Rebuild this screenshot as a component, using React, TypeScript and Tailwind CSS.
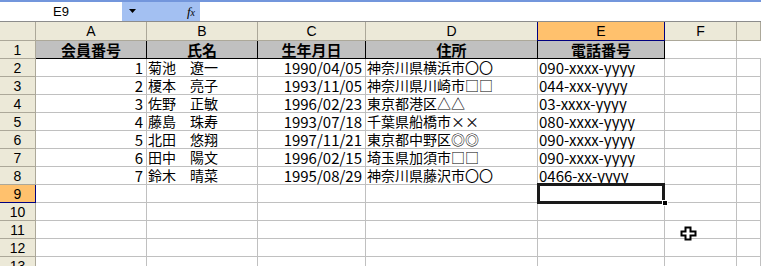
import React from 'react';

const JP = { fontFamily: '"Noto Sans CJK JP", "Liberation Sans", sans-serif' };
const UI = { fontFamily: '"Liberation Sans", Arial, sans-serif' };

const COLS = ['A', 'B', 'C', 'D', 'E', 'F', ''];

const HEAD = ['会員番号', '氏名', '生年月日', '住所', '電話番号'];

const ROWS = [
  [1, '菊池　遼一', '1990/04/05', '神奈川県横浜市〇〇', '090-xxxx-yyyy'],
  [2, '榎本　亮子', '1993/11/05', '神奈川県川崎市□□', '044-xxx-yyyy'],
  [3, '佐野　正敏', '1996/02/23', '東京都港区△△', '03-xxxx-yyyy'],
  [4, '藤島　珠寿', '1993/07/18', '千葉県船橋市××', '080-xxxx-yyyy'],
  [5, '北田　悠翔', '1997/11/21', '東京都中野区◎◎', '090-xxxx-yyyy'],
  [6, '田中　陽文', '1996/02/15', '埼玉県加須市□□', '090-xxxx-yyyy'],
  [7, '鈴木　晴菜', '1995/08/29', '神奈川県藤沢市〇〇', '0466-xx-yyyy'],
];

const GRID = 'grid grid-cols-[36px_111px_111px_108px_172px_127px_72px_1fr]';

const FormulaBar = () => (
  <div className="flex h-[22px] border-t-2 border-b border-t-[#7396dc] border-b-[#8c8c8c]">
    <div className="flex w-[122px] items-center justify-center bg-white text-[13px] text-black" style={UI}>
      E9
    </div>
    <div className="flex w-[78px] items-center justify-between bg-[#a3c0f2] pr-[5px] pl-[7px]">
      <svg width="8" height="5" viewBox="0 0 8 5">
        <path d="M0 0h7L3.5 4z" fill="#000" />
      </svg>
      <span className="text-[13px] italic text-black" style={{ fontFamily: '"Liberation Serif", serif' }}>
        f<span className="text-[10px]">x</span>
      </span>
    </div>
    <div className="flex-1 bg-white" />
  </div>
);

const ColumnHeader = () => (
  <div className={`${GRID} h-[19px]`}>
    <div className="border-r border-b border-[#aca899] bg-[#ece9d8]" />
    {COLS.map((c, i) =>
      c === 'E' ? (
        <div
          key={i}
          className="-ml-px flex items-center justify-center border-x border-b border-[#000080] bg-[#ffc16d] text-[14px] leading-[16px] text-black"
          style={UI}
        >
          {c}
        </div>
      ) : (
        <div
          key={i}
          className="flex items-center justify-center border-r border-b border-[#aca899] bg-[#ece9d8] text-[14px] leading-[16px] text-black"
          style={UI}
        >
          {c}
        </div>
      )
    )}
  </div>
);

const RowNum = ({ n }: { n: number }) =>
  n === 9 ? (
    <div
      className="flex items-center justify-center border-r border-b border-[#000080] bg-[#ffc16d] text-[14px] leading-[16px] text-black"
      style={UI}
    >
      {n}
    </div>
  ) : (
    <div
      className="flex items-center justify-center border-r border-b border-[#aca899] bg-[#ece9d8] text-[14px] leading-[16px] text-black"
      style={UI}
    >
      {n}
    </div>
  );

const TitleRow = () => (
  <div className={`${GRID} h-[18px]`}>
    <RowNum n={1} />
    {HEAD.map((h) => (
      <div
        key={h}
        className="flex items-center justify-center border-r border-b border-black bg-[#c0c0c0] text-[15px] leading-[17px] font-bold text-black"
        style={JP}
      >
        {h}
      </div>
    ))}
    <div className="border-r border-b border-[#c0c0c0] bg-white" />
    <div className="border-b border-[#c0c0c0] bg-white" />
  </div>
);

const Cell = ({
  children,
  align = 'left',
  size = 'text-[14px]',
}: {
  children?: React.ReactNode;
  align?: 'left' | 'right';
  size?: string;
}) => (
  <div
    className={`flex items-center border-r border-b border-[#c0c0c0] bg-white leading-[17px] whitespace-nowrap text-black ${size} ${
      align === 'right' ? 'justify-end pr-[3px]' : 'pl-[1px]'
    }`}
    style={JP}
  >
    {children}
  </div>
);

const DataRow = ({ n, row }: { n: number; row: (string | number)[] }) => (
  <div className={`${GRID} h-[18px]`}>
    <RowNum n={n} />
    <Cell align="right" size="text-[15px]">
      {row[0]}
    </Cell>
    <Cell>{row[1]}</Cell>
    <Cell align="right" size="text-[15px]">
      {row[2]}
    </Cell>
    <Cell>{row[3]}</Cell>
    <Cell size="text-[15px]">{row[4]}</Cell>
    <Cell />
    <Cell />
  </div>
);

const EmptyRow = ({ n }: { n: number }) => (
  <div className={`${GRID} h-[18px]`}>
    <RowNum n={n} />
    <Cell />
    <Cell />
    <Cell />
    <Cell />
    {n === 9 ? (
      <div className="relative border-r border-b border-[#c0c0c0] bg-white">
        <div className="absolute -top-[2px] -left-[1px] h-[21px] w-[128px] border-[3px] border-[#1a1a1a]" />
        <div className="absolute -right-[4px] -bottom-[4px] h-[6px] w-[6px] border border-white bg-black" />
      </div>
    ) : (
      <Cell />
    )}
    <Cell />
    <Cell />
  </div>
);

const Cursor = () => (
  <svg className="absolute top-[226px] left-[680px]" width="17" height="15" viewBox="0 0 17 15">
    <path d="M5.5 1.5h5v4h5v4h-5v4h-5v-4h-4v-4h4z" fill="#fff" stroke="#000" strokeWidth="2" />
  </svg>
);

export default function App() {
  return (
    <div className="relative h-[266px] w-[761px] overflow-hidden bg-white">
      <FormulaBar />
      <ColumnHeader />
      <TitleRow />
      {ROWS.map((r, i) => (
        <DataRow key={i} n={i + 2} row={r} />
      ))}
      {[9, 10, 11, 12, 13].map((n) => (
        <EmptyRow key={n} n={n} />
      ))}
      <Cursor />
    </div>
  );
}
